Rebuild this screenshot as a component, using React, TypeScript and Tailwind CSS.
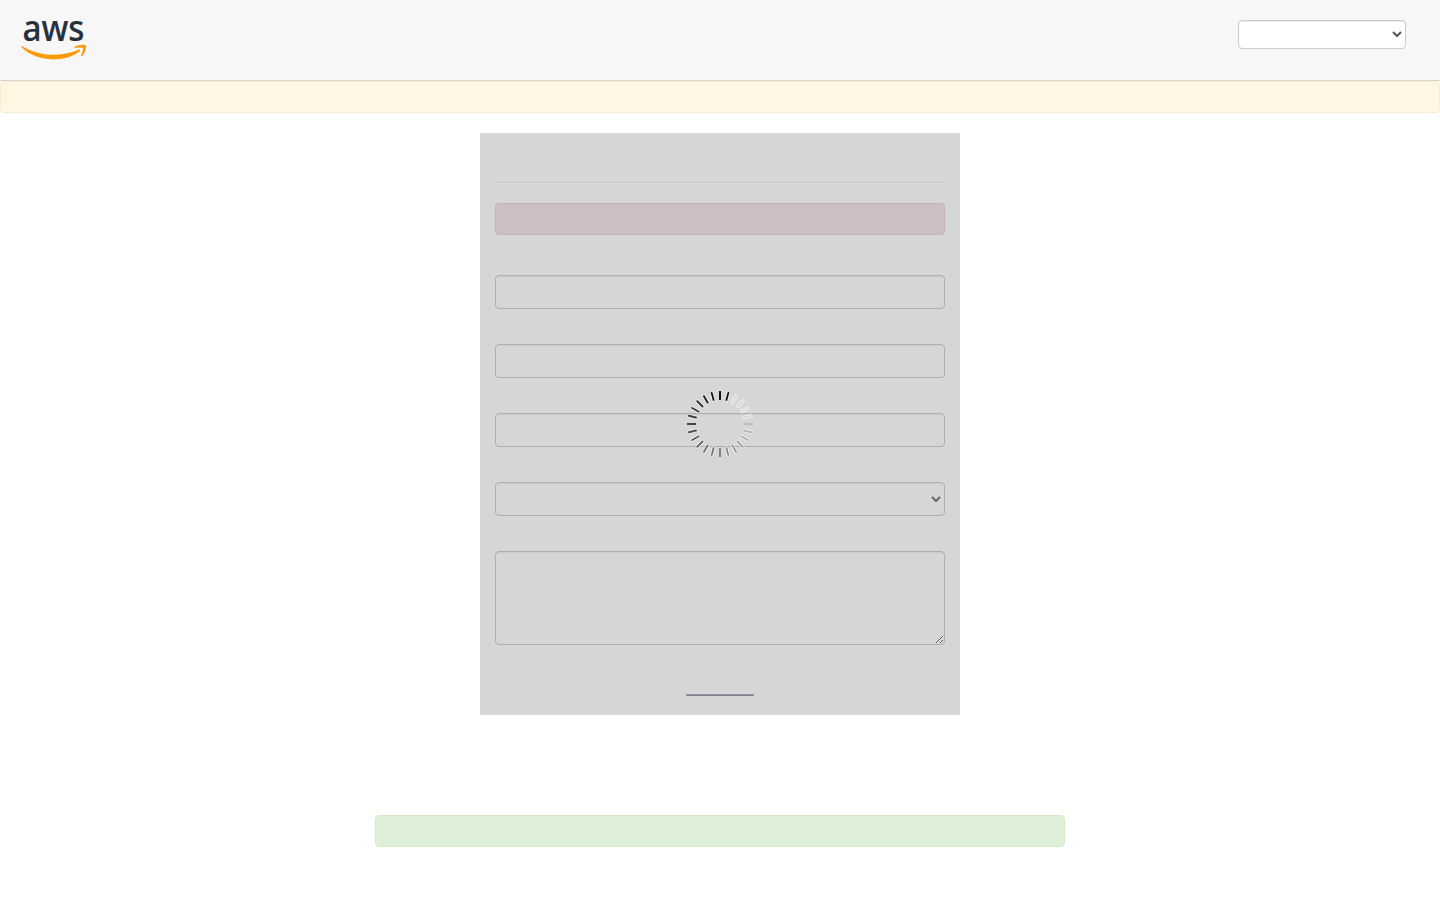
import React from 'react';

const spokes = Array.from({ length: 24 }, (_, i) => {
  if (i < 2) return { angle: i * 15, shade: 18 };
  if (i < 6) return { angle: i * 15, shade: 216 };
  return { angle: i * 15, shade: Math.round(188 - (i - 6) * 9.8) };
});

function Logo() {
  return (
    <svg className="h-10 w-[66px] overflow-visible" viewBox="0 0 66 40" aria-label="aws">
      <text
        x="1.4"
        y="20.6"
        textLength="62"
        lengthAdjust="spacingAndGlyphs"
        fill="#252f3e"
        stroke="#252f3e"
        strokeWidth="0.2"
        className="font-['Noto_Sans',sans-serif] text-[36px] font-medium"
      >
        aws
      </text>
      <path
        fill="#ff9900"
        d="M0.7 26 C10 31.6 21 34.8 32 34.8 C41 34.8 50 32.9 57.5 29.7 C58.8 29.2 59.9 30.5 58.6 31.5 C51.3 37 41.5 39.4 32 39.4 C19.8 39.4 8.8 35.3 0.4 27.1 C-0.2 26.5 0.1 25.7 0.7 26Z"
      />
      <path
        fill="#ff9900"
        d="M53.2 27 C57.1 24.4 63.6 24.1 64.7 25.4 C65.7 26.8 64.4 32.9 60.8 36.1 C60.2 36.6 59.6 36.3 59.9 35.6 C60.8 33.6 62.7 29.1 61.9 28.1 C61 27 56.4 27.5 54 27.8 C53.1 27.9 52.8 27.3 53.2 27Z"
      />
    </svg>
  );
}

function Spinner() {
  return (
    <svg className="absolute top-[256px] left-[205px] h-[70px] w-[70px]" viewBox="-35 -35 70 70">
      {spokes.map(({ angle, shade }) => (
        <g key={angle} transform={`rotate(${angle})`}>
          {angle % 90 !== 0 && (
            <path d="M0 -33.3V-23.6" stroke="#ffffff" strokeOpacity="0.9" strokeWidth="3.3" />
          )}
          <path d="M0 -33V-24" stroke={`rgb(${shade},${shade},${shade})`} strokeWidth={angle % 90 === 0 ? 2 : 1.9} />
        </g>
      ))}
    </svg>
  );
}

const field =
  'block w-full rounded-[4px] border border-[#aeafb1] bg-[#d5d6d8] px-3 text-sm text-[#666] shadow-[inset_0_1px_1px_rgba(0,0,0,0.06)] outline-none';

export default function App() {
  return (
    <div className="h-[900px] overflow-hidden bg-white font-['Liberation_Sans',sans-serif] text-sm">
      <header className="flex h-[81px] items-start justify-between border-b border-[#d5d5d6] bg-[#f7f7f7] pt-5 pr-[34px] pl-[21px]">
        <Logo />
        <select className="h-[29px] w-[168px] rounded-[4px] border border-[#ccc] bg-white text-sm text-[#555] shadow-[inset_0_1px_1px_rgba(0,0,0,0.075)]">
          <option />
        </select>
      </header>
      <div className="h-8 rounded-[4px] border border-[#faebcc] bg-[#fff7e3]" />
      <main className="relative mx-auto mt-5 h-[582px] w-[480px] bg-[#d5d6d8] px-[15px]">
        <div className="h-[50px] border-b border-[#c9cacc]" />
        <div className="mt-5 h-8 rounded-[4px] border border-[#c6b3b7] bg-[#cbbfc1]" />
        <form className="flex flex-col gap-[35px] pt-10">
          <input className={`${field} h-[34px]`} />
          <input className={`${field} h-[34px]`} />
          <input className={`${field} h-[34px]`} />
          <select className={`${field} h-[34px]`}>
            <option />
          </select>
          <textarea className={`${field} h-[94px]`} />
        </form>
        <div className="mx-auto mt-[49px] h-[2px] w-[68px] rounded-[1px] border-t border-[#929499] bg-[#7d8087]" />
        <Spinner />
      </main>
      <div className="mx-auto mt-[100px] h-8 w-[690px] rounded-[4px] border border-[#d6e9c6] bg-[#dff0d8]" />
    </div>
  );
}
